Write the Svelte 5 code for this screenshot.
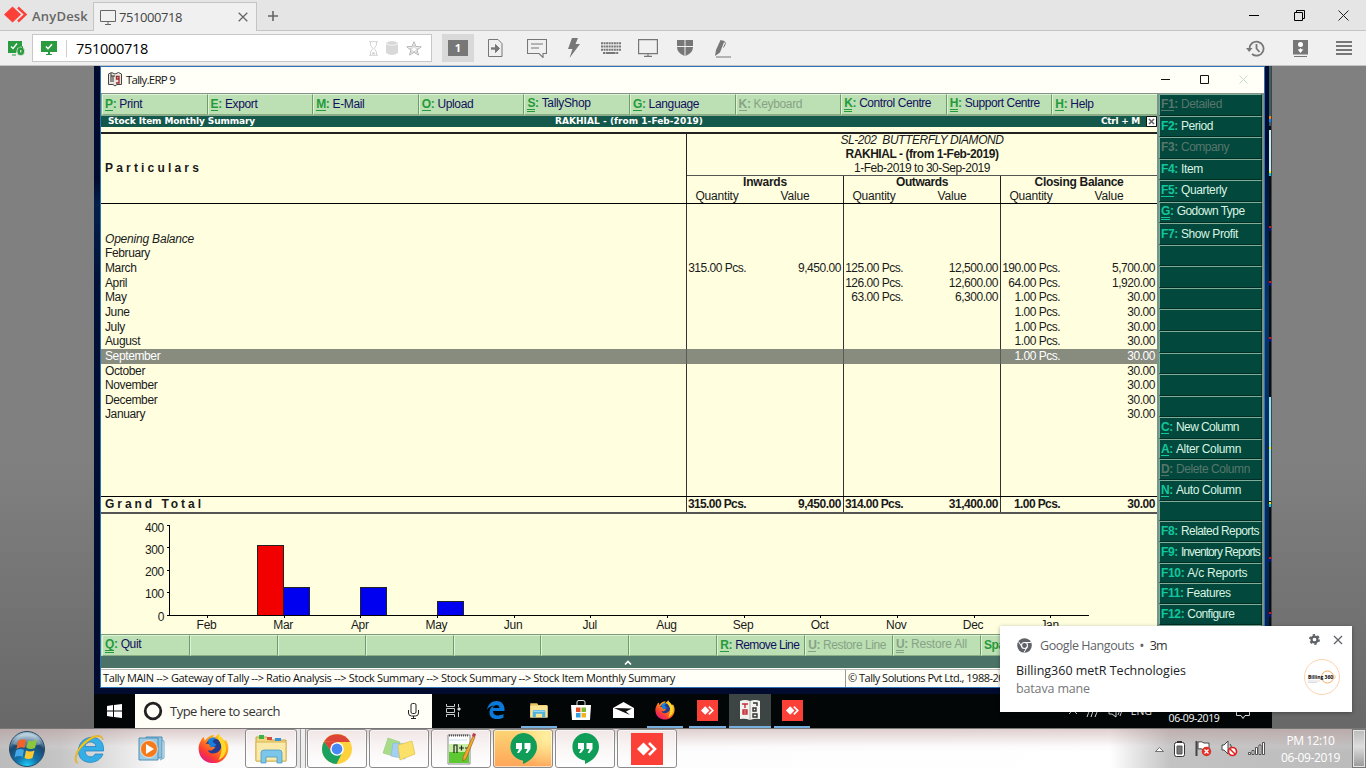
<script>
  function fit(node, width) {
    if (!width) return;
    node.style.letterSpacing = '0px';
    const natural = node.getBoundingClientRect().width;
    const count = node.textContent.length;
    node.style.letterSpacing = (width - natural) / count + 'px';
  }

  const menu = [
    ['P', 'Print', 1], ['E', 'Export', 1], ['M', 'E-Mail', 1], ['O', 'Upload', 1],
    ['S', 'TallyShop', 2], ['G', 'Language', 1], ['K', 'Keyboard', 1, true],
    ['K', 'Control Centre', 2, false, 72], ['H', 'Support Centre', 2, false, 75], ['H', 'Help', 1]
  ];

  const side = [
    ['F1', 'Detailed', 1, true, 41], ['F2', 'Period', 0, false, 32], ['F3', 'Company', 0, true, 48], ['F4', 'Item', 0, false, 22],
    ['F5', 'Quarterly', 1, false, 46], ['G', 'Godown Type', 2, false, 68], ['F7', 'Show Profit', 0, false, 57],
    null, null, null, null, null, null, null, null,
    ['C', 'New Column', 1, false, 63], ['A', 'Alter Column', 1, false, 65], ['D', 'Delete Column', 1, true, 74], ['N', 'Auto Column', 1, false, 65],
    null,
    ['F8', 'Related Reports', 0, false, 78], ['F9', 'Inventory Reports', 0, false, 79], ['F10', 'A/c Reports', 0, false, 60],
    ['F11', 'Features', 0, false, 44], ['F12', 'Configure', 0, false, 47], null, null
  ];

  const bottom = [
    ['Q', 'Quit', 2], null, null, null, null, null, null,
    ['R', 'Remove Line', 1, false, 64], ['U', 'Restore Line', 1, true, 63], ['U', 'Restore All', 2, true, 56],
    ['Space', 'Select', 0], null
  ];

  const rows = [
    ['Opening Balance'],
    ['February'],
    ['March', '315.00 Pcs.', '9,450.00', '125.00 Pcs.', '12,500.00', '190.00 Pcs.', '5,700.00'],
    ['April', '', '', '126.00 Pcs.', '12,600.00', '64.00 Pcs.', '1,920.00'],
    ['May', '', '', '63.00 Pcs.', '6,300.00', '1.00 Pcs.', '30.00'],
    ['June', '', '', '', '', '1.00 Pcs.', '30.00'],
    ['July', '', '', '', '', '1.00 Pcs.', '30.00'],
    ['August', '', '', '', '', '1.00 Pcs.', '30.00'],
    ['September', '', '', '', '', '1.00 Pcs.', '30.00'],
    ['October', '', '', '', '', '', '30.00'],
    ['November', '', '', '', '', '', '30.00'],
    ['December', '', '', '', '', '', '30.00'],
    ['January', '', '', '', '', '', '30.00']
  ];

  const months = ['Feb', 'Mar', 'Apr', 'May', 'Jun', 'Jul', 'Aug', 'Sep', 'Oct', 'Nov', 'Dec', 'Jan'];
</script>

{#snippet anydesk(size)}
  <svg width={size} height={size} viewBox="0 0 32 32">
    <rect width="32" height="32" fill="#fb4038" />
    <path d="M6 16l6.500-6.500L19 16l-6.500 6.500z" fill="#fff" />
    <path d="M18 10l6 6-6 6" fill="none" stroke="#fff" stroke-width="2.600" />
  </svg>
{/snippet}

{#snippet firefox(size)}
  <svg width={size} height={size} viewBox="0 0 32 32">
    <defs>
      <linearGradient id="fx" x1="0.9" y1="0" x2="0.2" y2="1">
        <stop offset="0" stop-color="#ffe52e" /><stop offset=".45" stop-color="#ff8a16" /><stop offset=".75" stop-color="#fb3b35" /><stop offset="1" stop-color="#e0148c" />
      </linearGradient>
    </defs>
    <path d="M3 8C4 5 6 4 6 4l1 4c3-4 6-6 10-6l-2 3c4-1 5-3 6-5 1 4 4 4 6 8l2-1c2 4 3 7 2 12-2 8-8 12-15 12S2 27 1 19C0 15 1 11 3 8z" fill="url(#fx)" />
    <path d="M8 11c3-4 8-7 13-4 5 4 4 10-1 13-5 2-8 1-10-2l4 0 4-3-5-2-2-2z" fill="#263b8e" />
    <path d="M10 8c2-3 5-4 8-3l-3 4 4 3c-1 2-4 2-6 3z" fill="#1582dd" />
    <path d="M21 2c5 4 8 9 8 16-1 5-4 8-8 10 4-7 5-15 0-21z" fill="#ffd928" />
  </svg>
{/snippet}

{#snippet folder(size)}
  <svg width={size} height={size} viewBox="0 0 32 32">
    <path d="M2 5h11l2 3h14v20H2z" fill="#e9c45d" />
    <path d="M2 9h28v19H2z" fill="#fbe394" />
    <path d="M6 28V18q0-2 2-2h16q2 0 2 2v10h-5v-6H11v6z" fill="#4fb3df" />
    <path d="M7 18h18" stroke="#9edcf4" stroke-width="2" />
  </svg>
{/snippet}

{#snippet hangouts()}
  <svg width="30" height="34" viewBox="0 0 30 34">
    <path d="M15 1a14 14 0 0 1 14 14c0 8-7 14-14 17v-3.500A13.800 13.800 0 0 1 15 1z" fill="#0f9d58" />
    <path d="M8 11h6v6l-3 4H9l2-4H8zm8.500 0h6v6l-3 4h-2l2-4h-3z" fill="#fff" />
  </svg>
{/snippet}

{#snippet key([k, label, lines, off, width])}
  <span class="key" class:off>
    <b class:one={lines === 1} class:two={lines === 2}>{k}</b><i>:</i>&nbsp;<span use:fit={width}>{label}</span>
  </span>
{/snippet}

<div class="screen">
  <header class="titlebar">
    <div class="brand">
      <svg width="25" height="20" viewBox="0 0 25 20">
        <path d="M0 8.500l8.500-8 8.500 8-8.500 8z" fill="#fb4038" />
        <path d="M14 1.500l7.500 7-7.500 7" fill="none" stroke="#fb4038" stroke-width="2.400" />
      </svg>
      <span use:fit={56}>AnyDesk</span>
    </div>
    <div class="tab">
      <svg width="16" height="15" viewBox="0 0 16 15" fill="none" stroke="#666" stroke-width="1"><path d="M.5.5h15v11H.5zM8 12v2M5 14.500h6" /></svg>
      <span class="tabname" use:fit={63}>751000718</span>
      <svg width="10" height="10" viewBox="0 0 10 10" stroke="#666" stroke-width="1.300"><path d="M.7.7l8.600 8.600M9.300.7L.7 9.300" /></svg>
    </div>
    <svg class="plus" width="10" height="10" viewBox="0 0 10 10" stroke="#666" stroke-width="1.600"><path d="M5 0v10M0 5h10" /></svg>
    <div class="controls">
      <svg width="10" height="11"><path d="M0 5.500h10" stroke="#000" /></svg>
      <svg width="11" height="11" viewBox="0 0 11 11" fill="none" stroke="#000"><path d="M.5 2.500h8v8h-8zM2.500 2.500v-2h8v8h-2" /></svg>
      <svg width="11" height="11" viewBox="0 0 11 11" stroke="#222" stroke-width="1"><path d="M.5.5l10 10M10.500.5l-10 10" /></svg>
    </div>
  </header>

  <div class="toolbar">
    <svg class="lock" width="17" height="15" viewBox="0 0 17 15">
      <path d="M0 0h14v6h-3l-3 6H0z" fill="#2a9b3f" /><path d="M4 14h4" stroke="#2a9b3f" />
      <path d="M3 5.500l2 2 4-5" stroke="#fff" fill="none" stroke-width="1.300" />
      <rect x="9" y="6" width="7.500" height="8.500" rx="3.500" fill="#2a9b3f" stroke="#f0f0f0" stroke-width=".7" /><path d="M11 7V5.500q1.700-3 3.500 0V7" stroke="#2a9b3f" fill="none" /><path d="M12.800 9v2.500" stroke="#fff" />
    </svg>
    <div class="address">
      <svg width="16" height="14" viewBox="0 0 16 14"><path d="M0 0h16v11H0zM7 11h2v2H7zM5 13h6v1H5z" fill="#2a9b3f" /><path d="M5 5.500l2 2.200 4-4.500" stroke="#fff" fill="none" stroke-width="1.500" /></svg>
      <span class="sep"></span>
      <span class="addr" use:fit={72}>751000718</span>
      <svg class="hour" width="9" height="15" viewBox="0 0 9 15" fill="none" stroke="#d4d4d4"><path d="M0 .7h9M0 14.300h9M1.500 1v3l2.300 3.500-2.300 3.500v3M7.500 1v3L5.200 7.500l2.300 3.500v3" /><path d="M3 13l1.500-2L6 13z" fill="#d4d4d4" /></svg>
      <svg class="drum" width="12" height="14" viewBox="0 0 12 14"><path d="M0 2q6-4 12 0v10q-6 4-12 0z" fill="#d8d8d8" /><path d="M0 3q6 3 12 0" fill="none" stroke="#f2f2f2" /></svg>
      <svg width="16" height="15" viewBox="0 0 16 15" fill="none" stroke="#b4b4b4"><path d="M8 .7l1.900 4.800 5.300.3-4.100 3.300 1.400 5L8 11.300l-4.500 2.800 1.400-5L.8 5.800l5.300-.3z" /><path d="M8 4l1.200 3 3 .3-2.400 1.800.8 2.700L8 10.200l-2.600 1.600.8-2.700-2.400-1.800 3-.3z" stroke-width=".6" /></svg>
    </div>
    <div class="tools">
      <span class="active"><b>1</b></span>
      <svg width="15" height="18" viewBox="0 0 15 18" fill="none" stroke="#777"><path d="M.5.5h9.500l4 4v13H.5z" /><path d="M3 9.500h5" stroke-width="2.400" /><path d="M7.500 5.500l4 4-4 4z" fill="#777" /></svg>
      <svg width="20" height="19" viewBox="0 0 20 19" fill="none" stroke="#777" stroke-width="1.100"><path d="M.5.5h19v14H16v4l-4-4H.5zM4 5h12M4 9h8" /></svg>
      <svg width="13" height="20" viewBox="0 0 13 20" fill="#777"><path d="M5 0h6L8.500 6H13L2.500 20l3-9H1z" /></svg>
      <svg width="20" height="12" viewBox="0 0 20 12" stroke="#777" stroke-width="2" fill="none"><path d="M0 1.200h20M0 4.600h20M0 7.800h20" stroke-dasharray="2 .57" /><path d="M2 10.900h16" stroke-dasharray="2 .6 10 .6 2" /></svg>
      <svg width="20" height="18" viewBox="0 0 20 18" fill="none" stroke="#777" stroke-width="1.200"><path d="M.6.6h18.800v14H.6zM10 15v2M6 17.400h8" /></svg>
      <svg width="16" height="16" viewBox="0 0 16 16" fill="#777"><path d="M0 0h7.500v6H0zM8.500 0H16v6H8.500zM0 7h7.500v9Q0 13 0 7zM8.500 7H16q0 6-7.500 9z" /></svg>
      <svg width="16" height="19" viewBox="0 0 16 19" fill="#777"><path d="M5.500 1l4 1L5 13.500 0 17l1-6z" /><path d="M1 18h15M9.500 2.500l1 2-2 4" stroke="#777" fill="none" /></svg>
    </div>
    <div class="rtools">
      <svg width="19" height="17" viewBox="0 0 19 17" fill="none" stroke="#777" stroke-width="1.800"><path d="M3.500 8.500a7 7 0 1 1 2.500 5.500M10.500 4v4.500l3 3.500" /><path d="M0 8h6.500L3.200 12z" fill="#777" stroke="none" /></svg>
      <svg width="15" height="17" viewBox="0 0 15 17"><path d="M0 0h15v14.500H0zM1 16h13v1H1z" fill="#777" /><circle cx="7.500" cy="4.500" r="2.500" fill="#fff" /><path d="M3.500 8q2 3 4 0 2 3 4 0l-4 5z" fill="#fff" /></svg>
      <svg width="16" height="14" viewBox="0 0 16 14" stroke="#777" stroke-width="2"><path d="M0 1h16M0 5h16M0 9h16M0 13h16" /></svg>
    </div>
  </div>

  <div class="viewport">
    <div class="remote">
      <div class="desk">
        <div class="edge left"></div>
        <div class="tally">
          <div class="caption">
            <svg width="14" height="15" viewBox="0 0 14 15"><path d="M.5 2l3-1.500L7 2l3.500-1.500 3 1.500v10.500H9L7 14l-2-1.500H.5z" fill="#e8e6de" stroke="#444" /><path d="M3 4h4M5 4v6M3 1v9" stroke="#333" fill="none" /><path d="M11 7H8.500V4.500H11V11H8" stroke="#a02828" stroke-width="1.300" fill="none" /></svg>
            <span use:fit={49}>Tally.ERP 9</span>
            <div class="capbtns">
              <svg width="9" height="9"><path d="M0 4.500h9" stroke="#111" /></svg>
              <svg width="9" height="9"><path d="M.5.5h8v8h-8z" stroke="#111" fill="none" /></svg>
              <svg width="9" height="9"><path d="M.5.5l8 8M8.500.5l-8 8" stroke="#c8d8d4" /></svg>
            </div>
          </div>
          <div class="work">
            <div class="main">
              <div class="menu">
                {#each menu as m}<div class="btn">{@render key(m)}</div>{/each}
              </div>
              <div class="strip">
                <span use:fit={147}>Stock Item Monthly Summary</span>
                <span use:fit={148}>RAKHIAL - (from 1-Feb-2019)</span>
                <span class="ctrl"><span use:fit={39}>Ctrl + M</span>
                  <svg width="11" height="11"><path d="M.5.5h10v10H.5z" fill="#fff" stroke="#111" /><path d="M3 3l5 5M8 3L3 8" stroke="#666" stroke-width="1.600" /></svg></span>
              </div>
              <div class="report">
                <div class="head">
                  <div class="part"><b use:fit={97}>Particulars</b></div>
                  <div class="cols">
                    <div class="desc">
                      <em use:fit={163}>SL-202&nbsp; BUTTERFLY DIAMOND</em>
                      <b use:fit={153}>RAKHIAL - (from 1-Feb-2019)</b>
                      <span use:fit={136}>1-Feb-2019 to 30-Sep-2019</span>
                    </div>
                    <div class="groups">
                      {#each [['Inwards', 44], ['Outwards', 52], ['Closing Balance', 89]] as [g, w]}
                        <div class="group"><b use:fit={w}>{g}</b><span use:fit={43}>Quantity</span><span use:fit={29}>Value</span></div>
                      {/each}
                    </div>
                  </div>
                </div>
                <div class="body rules">
                  {#each rows as r, i}
                    <div class="row" class:sel={i === 8} class:ital={i === 0}>
                      <span class="name">{r[0]}</span>
                      {#each [1, 3, 5] as c}
                        <span class="qty">{r[c] ?? ''}</span><span class="val">{r[c + 1] ?? ''}</span>
                      {/each}
                    </div>
                  {/each}
                </div>
                <div class="row total rules">
                  <span class="name" use:fit={103}>Grand Total</span>
                  <span class="qty">315.00 Pcs.</span><span class="val">9,450.00</span>
                  <span class="qty">314.00 Pcs.</span><span class="val">31,400.00</span>
                  <span class="qty">1.00 Pcs.</span><span class="val">30.00</span>
                </div>
                <svg class="chart" width="1056" height="119" viewBox="101 514 1056 119">
                  {#each [400, 300, 200, 100, 0] as v, i}
                    <text x="164" y={531.5 + i * 22.3} text-anchor="end">{v}</text>
                    <path d={`M167 ${Math.round(526 + i * 22.4) - 0.5}h3`} stroke="#000" />
                  {/each}
                  {#each months as m, i}
                    <text x={206.5 + i * 76.65} y="629" text-anchor="middle">{m}</text>
                    <path d={`M${Math.round(207 + i * 76.65) + 0.5} 615v3`} stroke="#000" />
                  {/each}
                  <g stroke="#222">
                    <rect x="257.5" y="545.5" width="26" height="70" fill="#f20000" />
                    <rect x="283.5" y="587.5" width="26" height="28" fill="#0000f0" />
                    <rect x="360.500" y="587.5" width="26" height="28" fill="#0000f0" />
                    <rect x="437.500" y="601.5" width="26" height="14" fill="#0000f0" />
                  </g>
                  <path d="M169.500 525v90.500H1089" fill="none" stroke="#000" />
                </svg>
              </div>
              <div class="bottom">
                {#each bottom as m}<div class="btn">{#if m}{@render key(m)}{/if}</div>{/each}
              </div>
            </div>
            <div class="side">
              {#each side as s}<div class="sbtn">{#if s}{@render key(s)}{/if}</div>{/each}
            </div>
          </div>
          <div class="expand"><svg width="8" height="5"><path d="M1 4.500L4 1.500l3 3" stroke="#fff" stroke-width="1.600" fill="none" /></svg></div>
          <div class="status">
            <span class="path"><span use:fit={572}>Tally MAIN --&gt; Gateway of Tally --&gt; Ratio Analysis --&gt; Stock Summary --&gt; Stock Summary --&gt; Stock Item Monthly Summary</span></span>
            <span class="copy">© Tally Solutions Pvt Ltd., 1988-2019</span>
          </div>
        </div>
        <div class="edge right">
          <svg width="3" height="628">
            <rect width="3" height="628" fill="#061010" /><rect x="2" width="1" height="628" fill="#444" />
            <rect y="0" width="2" height="60" fill="#355f62" /><rect y="50" width="2" height="3" fill="#f80" /><rect y="53" width="2" height="3" fill="#08f" />
            <rect y="64" width="2" height="42" fill="#c4eef4" /><rect y="105" width="2" height="2" fill="#ee0" /><rect y="107" width="2" height="3" fill="#0cd" />
            <rect y="331" width="2" height="104" fill="#8de6ee" /><rect y="381" width="2" height="2" fill="#ee0" /><rect y="436" width="2" height="2" fill="#ee0" /><rect y="438" width="2" height="3" fill="#0cd" />
            {#each [160, 215, 271, 491, 546] as y}<rect {y} width="2" height="2" fill="#e01010" /><rect y={y + 2} width="2" height="3" fill="#00108a" />{/each}
          </svg>
        </div>
      </div>
      <div class="rbar">
        <div class="rstart"><svg width="15" height="14" viewBox="0 0 15 14" fill="#fff"><path d="M0 2l6-1v5.500H0zM7 .9L15 0v6.500H7zM0 7.500h6V13l-6-1zM7 7.500h8V14l-8-.9z" /></svg></div>
        <div class="search">
          <svg width="20" height="20"><circle cx="10" cy="10" r="7.800" fill="none" stroke="#222" stroke-width="2.800" /></svg>
          <span use:fit={110}>Type here to search</span>
          <svg width="11" height="16" viewBox="0 0 11 16" fill="none" stroke="#222"><rect x="3" y=".5" width="5" height="10" rx="1.500" /><path d="M.5 7v3q0 3 3 3h4q3 0 3-3V7M5.500 13v2M3 15.500h5" /></svg>
        </div>
        <div class="rapps">
          <span><svg width="15" height="13" viewBox="0 0 15 13" fill="none" stroke="#ccc"><path d="M.5 0v2.500h8V0M.5 13v-2.500h8V13M.5 4.500h8v4h-8zM12.500 0v3M12.500 8v5" /><path d="M12 4h2v2h-2z" fill="#fff" /></svg></span>
          <span><svg width="18" height="18" viewBox="0 0 18 18"><path d="M0 9C1 3 5 0 9.500 0 15 0 18 4 17.500 10H6c0 5 6 5.500 10.500 3v3.500C10 20 2 18 2.500 10.500 3 7 5 5 8 4.500 4 4.500 1.500 6 0 9zm6-2h6.500c0-4-6-4-6.500 0z" fill="#0b79d8" /></svg></span>
          <span class="open">{@render folder(20)}</span>
          <span><svg width="20" height="20" viewBox="0 0 20 20"><path d="M6 6V2q0-1.500 2-1.500h4q2 0 2 1.500v4" fill="none" stroke="#ddd" /><path d="M0 5h20l-1 15H1z" fill="#fff" /><path d="M5 7.500h4.500V12H5z" fill="#e64b25" /><path d="M10.500 7.500H15V12h-4.500z" fill="#7cb82f" /><path d="M5 13h4.500v4.500H5z" fill="#2f9fe0" /><path d="M10.500 13H15v4.500h-4.500z" fill="#f3b51b" /></svg></span>
          <span><svg width="21" height="16" viewBox="0 0 21 16"><path d="M0 6l10.500-6L21 6v10H0z" fill="#fff" /><path d="M1 6l18 .5-6 3 4 3.500z" fill="#111" /></svg></span>
          <span class="open">{@render firefox(20)}</span>
          <span class="open">{@render anydesk(21)}</span>
          <span class="open current"><svg width="20" height="21" viewBox="0 0 20 21"><path d="M0 1q5-2 10 0 5-2 10 0v18q-5-1-10 1-5-2-10-1z" fill="#f2f2ee" /><path d="M10 1v19" stroke="#aaa" /><path d="M2 4h6M5 4v4M3 10h4v4H3zM7 12H3" stroke="#c33038" stroke-width="1.400" fill="none" /><path d="M13 3h4v3M13 8h3v3h-3zM13 14h4v3h-4z" stroke="#333" stroke-width="1.400" fill="none" /></svg></span>
          <span class="open">{@render anydesk(21)}</span>
        </div>
        <div class="rtray">
          <svg width="10" height="6"><path d="M1 5l4-4 4 4" stroke="#ddd" fill="none" /></svg>
          <svg width="14" height="12" fill="none" stroke="#ddd"><path d="M1 11L4 3M5 11l3-9M9 11l2-5" /></svg>
          <svg width="15" height="12" fill="none" stroke="#ddd"><path d="M1 4h3l4-3v10L4 8H1zM10 4q2 2 0 5M12 2q3 4 0 8" /></svg>
          <span class="eng">ENG</span>
          <span class="rdate">12:10 PM<br />06-09-2019</span>
          <svg width="14" height="15" fill="none" stroke="#ddd"><path d="M.5.5h13v10H9l-2 3-2-3H.5z" /></svg>
        </div>
      </div>
    </div>
  </div>

  <footer class="taskbar">
    <div class="start">
      <svg width="38" height="38" viewBox="0 0 38 38">
        <defs><radialGradient id="orb" cx=".5" cy="1" r=".9"><stop offset="0" stop-color="#1fd4ff" /><stop offset=".35" stop-color="#1273ac" /><stop offset=".75" stop-color="#1b486f" /><stop offset="1" stop-color="#9fbdd0" /></radialGradient></defs>
        <circle cx="19" cy="19" r="17.500" fill="url(#orb)" stroke="#2b4a60" />
        <path d="M5 14Q10 3 19 3t14 11q-14 6-28 0z" fill="#fff" opacity=".28" />
        <path d="M10 11q4-3 8-1l-1.500 8q-4-2-8 1z" fill="#f2632a" /><path d="M20 10.500q4 2 9-1l-2 8.500q-4 2-8.500 0z" fill="#8cc63c" /><path d="M8 20.500q4-2.500 8-.5l-1.500 7q-4-2-8 .5z" fill="#44a8e6" /><path d="M18 20.500q4 2 8.500 0l-2 7.500q-4 2-8 0z" fill="#fdc92e" />
      </svg>
    </div>
    <div class="pins">
      <svg width="32" height="32" viewBox="0 0 32 32"><path d="M29.500 18H11c0 6 8 8 10 3h8c-4 11-21 11-24 1C2 9 13 2 22 5c6 2 8 7 7.500 13zM11 13.500h11c-1-6-10-6-11 0z" fill="#35aee6" stroke="#1a7bbd" stroke-width=".7" /><path d="M29 7C29 0 18 1 9 10 0 19-1 31 4 30c-4-3-1-12 7-19S27 1 29 7z" fill="#f8c81c" stroke="#d99a10" stroke-width=".5" /></svg>
      <svg width="28" height="26" viewBox="0 0 28 26"><path d="M8 1h16v21H8z" fill="#8fc3df" stroke="#4f8fb5" /><path d="M24 4l2 1v17l-4 2" fill="none" stroke="#6aa7c8" /><path d="M1 2h19v22H1z" fill="#9dcbe4" stroke="#4f8fb5" /><circle cx="11" cy="13" r="8.500" fill="#f47a1c" stroke="#fff" stroke-width=".6" /><path d="M8 8l8 5-8 5z" fill="#fff" /></svg>
      {@render firefox(31)}
    </div>
    <div class="tasks">
      <div class="task explorer"><svg width="32" height="32" viewBox="0 0 32 32"><path d="M1 4h11l2 3h17v21H1z" fill="#f3d77e" stroke="#caa446" /><path d="M4 2h5v4H4z" fill="#3bb54a" /><path d="M12 4h5v3h-5z" fill="#d94b3a" /><path d="M20 5h6v3h-6z" fill="#3a93d9" /><path d="M1 9h30v19H1z" fill="#fae9a8" stroke="#d8b653" /><path d="M6 30V20q0-3 3-3h15q3 0 3 3v10h-5v-6H11v6z" fill="#7cc6ea" stroke="#3f93c2" stroke-width=".7" /></svg></div>
      <div class="stack"></div>
      <div class="task"><svg width="32" height="32" viewBox="0 0 32 32"><circle cx="16" cy="16" r="15" fill="#fdd23c" /><path d="M3 8.500A15 15 0 0 1 29 9H16z" fill="#dc4437" /><path d="M3 8.500A15 15 0 0 0 15.500 31L21 20l-10-1z" fill="#1ba261" /><path d="M3 8.500L10 18l6-9z" fill="#dc4437" /><circle cx="16" cy="16" r="6.800" fill="#fff" /><circle cx="16" cy="16" r="5.400" fill="#4688f4" /></svg></div>
      <div class="task"><svg width="34" height="28" viewBox="0 0 34 28"><path d="M6 3l12 4-4 15L1 18z" fill="#a8dc8a" stroke="#8bc46b" stroke-width=".5" /><path d="M11 8l13 1-1 15-14-3z" fill="#a4cff2" stroke="#7fb2dc" stroke-width=".5" /><path d="M16 10l14-4 3 13-15 6z" fill="#fbe16a" stroke="#d8bb3c" stroke-width=".6" /></svg></div>
      <div class="task"><svg width="32" height="34" viewBox="0 0 32 34"><path d="M3 3h22v29H3z" fill="#fff" stroke="#888" /><path d="M4 20h20v11H4z" fill="#5ec832" /><path d="M4 12h20v8H4z" fill="#c8f0a4" /><path d="M4 3.500h20" stroke="#555" stroke-dasharray="1 1" stroke-width="2" /><path d="M4 8h18" stroke="#cde0ee" /><path d="M9 21v-8h3v8M14 16h5M16.500 13.500v5M20 16h4" stroke="#222" fill="none" stroke-width="1.200" /><path d="M28 4l2 1-9 22-3 2v-4z" fill="#f3a72e" stroke="#8f5d18" stroke-width=".6" /><path d="M27 4l1-3 3 1-1 3z" fill="#b6404a" /></svg></div>
      <div class="task hot">{@render hangouts()}</div>
      <div class="task">{@render hangouts()}</div>
      <div class="task">{@render anydesk(32)}</div>
    </div>
    <div class="tray">
      <svg width="9" height="6"><path d="M.5 5.500l4-4 4 4z" fill="#fff" stroke="#555" stroke-width=".8" /></svg>
      <svg width="11" height="16" viewBox="0 0 11 16"><rect x=".5" y="1.500" width="10" height="14" rx="2" fill="#fff" stroke="#333" /><path d="M3 .5h5" stroke="#333" /><path d="M3 5h5v8H3z" fill="#777" stroke="#555" /></svg>
      <svg width="17" height="17" viewBox="0 0 17 17"><path d="M1.500 1v15" stroke="#444" stroke-width="2" /><path d="M3 2q4-1 6 1h5v7H9q-3-2-6-1z" fill="#fff" stroke="#444" /><circle cx="11.500" cy="11.500" r="4.700" fill="#e03028" /><path d="M9.500 9.500l4 4M13.500 9.500l-4 4" stroke="#fff" stroke-width="1.400" /></svg>
      <svg width="17" height="17" viewBox="0 0 17 17"><path d="M1 5h2l4-4v13l-4-4H1z" fill="#fff" stroke="#444" /><path d="M9 4q2 2 1 4" stroke="#444" fill="none" /><circle cx="11.500" cy="11.500" r="4" fill="#fff" stroke="#e02020" stroke-width="1.700" /><path d="M9 9l5 5" stroke="#e02020" stroke-width="1.500" /></svg>
      <svg width="17" height="13" viewBox="0 0 17 13" fill="#fff" stroke="#444" stroke-width=".9"><path d="M.5 10.500h2v2h-2zM4 8.500h2v4H4zM7.500 5.500h2v7h-2zM11 3h2v9.500h-2zM14.500.5h2v12h-2z" /></svg>
    </div>
    <div class="clock"><span use:fit={48}>PM 12:10</span><span use:fit={59}>06-09-2019</span></div>
    <div class="peek"></div>
  </footer>

  <aside class="toast">
    <svg width="15" height="15" viewBox="0 0 15 15"><circle cx="7.500" cy="7.500" r="7.300" fill="#5f6368" /><circle cx="7.500" cy="7.500" r="3" fill="none" stroke="#fff" stroke-width="1.100" /><path d="M7.500 4.500H14M4.900 9L1.500 3.500M10.100 9L7 14.500" stroke="#fff" stroke-width="1" /></svg>
    <div class="thead"><span use:fit={94}>Google Hangouts</span><b>•</b><span class="time" use:fit={17}>3m</span></div>
    <svg class="gear" width="11" height="11" viewBox="0 0 10 10"><circle cx="5" cy="5" r="2.700" fill="none" stroke="#5f6368" stroke-width="2" /><circle cx="5" cy="5" r="4.200" fill="none" stroke="#5f6368" stroke-width="1.500" stroke-dasharray="2.200 2.200" /></svg>
    <svg class="close" width="10" height="10" viewBox="0 0 10 10" stroke="#5f6368" stroke-width="1.300"><path d="M1 1l8 8M9 1L1 9" /></svg>
    <div class="msg"><span use:fit={170}>Billing360 metR Technologies</span><small use:fit={74}>batava mane</small></div>
    <svg class="logo" width="36" height="36" viewBox="0 0 36 36"><circle cx="18" cy="18" r="17.500" fill="#fff" stroke="#fbd3ae" /><circle cx="23.500" cy="18" r="6" fill="none" stroke="#f3a04c" stroke-width=".9" /><text x="4" y="19.800" font-size="5.500" font-weight="bold" textLength="25" lengthAdjust="spacingAndGlyphs">Billing 360</text><path d="M30 16l1.500 2-1.500 2" stroke="#f3a04c" fill="none" stroke-width=".6" /><path d="M4 22h12M4 23.500h9" stroke="#bbb" stroke-width=".5" /></svg>
  </aside>
</div>

<style>
  :global(body) { margin: 0; overflow: hidden; }
  .screen { position: relative; width: 1366px; height: 768px; overflow: hidden; display: flex; flex-direction: column; font-family: "Open Sans", sans-serif; white-space: nowrap; }
  .screen :global(*) { box-sizing: border-box; }
  svg { display: block; flex: none; }

  .titlebar { height: 31px; flex: none; background: #e5e5e5; border-bottom: 1px solid #c4c4c4; display: flex; align-items: center; }
  .brand { width: 93px; padding: 1px 0 0 4px; display: flex; align-items: center; gap: 3px; font: 600 13px "Open Sans", sans-serif; color: #666; }
  .tab { width: 164px; height: 29px; margin-top: 2px; background: #f0f0f0; border: 1px solid #c4c4c4; border-bottom: 0; display: flex; align-items: center; padding: 0 8px 0 6px; font-size: 13px; color: #444; align-self: flex-end; margin-bottom: -1px; }
  .tabname { margin-left: 3px; }
  .tab svg:last-child { margin-left: auto; }
  .plus { margin-left: 11px; margin-top: 2px; }
  .controls { margin-left: auto; display: flex; align-items: center; gap: 33px; padding-right: 17px; }
  .controls svg:first-child { margin-right: 2px; }

  .toolbar { height: 35px; flex: none; background: #f0f0f0; border-bottom: 1px solid #c4c4c4; display: flex; align-items: center; }
  .lock { margin-left: 8px; }
  .address { width: 400px; height: 28px; margin-left: 7px; background: #fff; border: 1px solid #c8c8c8; display: flex; align-items: center; padding: 0 9px 0 8px; }
  .sep { width: 1px; height: 17px; background: #ccc; margin: 0 9px; }
  .addr { font-size: 14.5px; color: #000; }
  .hour { margin-left: auto; }
  .drum { margin: 0 8px; }
  .tools { margin-left: 10px; display: grid; grid-template-columns: 32px 42px 42px 30px 46px 28px 46px 30px; place-items: center; height: 28px; }
  .active { width: 32px; height: 28px; background: #d9d9d9; display: grid; place-items: center; }
  .active b { width: 20px; height: 16px; background: #777; color: #fff; font-size: 11px; line-height: 16px; text-align: center; }
  .rtools { margin-left: auto; display: flex; gap: 28px; align-items: center; padding-right: 14px; }

  .viewport { flex: 1; min-height: 0; background: linear-gradient(#808080 60%, #686868); padding-left: 94px; }
  .remote { width: 1178px; height: 662px; display: flex; flex-direction: column; background: #010b30; }
  .desk { height: 628px; display: flex; flex: none; }
  .edge.left { width: 6px; background: linear-gradient(#010b30 18%, #02204a 22%, #011038 35%, #010b30); }
  .edge.right { width: 7px; padding-left: 4px; background: linear-gradient(#010b30 12%, #063568 40%, #042a5e 65%, #082050); }
  .tally { width: 1165px; height: 622px; border: 1px solid #2c72b4; background: #fffff8; display: flex; flex-direction: column; font: 12px "Liberation Sans", sans-serif; letter-spacing: -.35px; color: #151515; }
  .caption { height: 26px; flex: none; padding: 0 16px 2px 7px; display: flex; align-items: center; gap: 4px; font: 11.5px "Open Sans", sans-serif; }
  .capbtns { margin-left: auto; display: flex; gap: 30px; }
  .work { height: 563px; flex: none; display: flex; border-top: 1px solid #87918b; }
  .main { width: 1056px; display: flex; flex-direction: column; }
  .menu { height: 22px; flex: none; display: grid; grid-template-columns: repeat(10, 105.6px); background: #8fac8a; padding: 0 0 1px 1px; overflow: hidden; }
  .btn { background: #bcdfb4; border: 1px solid #6f9c6c; border-left-color: #ddf3d6; border-top-color: #ddf3d6; border-bottom-color: #89ad85; display: flex; align-items: center; padding: 0 0 1px 2px; overflow: hidden; }
  .key { line-height: 14px; color: #10105c; }
  .key b { color: #259a3a; display: inline-block; line-height: 12px; }
  .key i { color: #259a3a; font-style: normal; font-weight: bold; }
  .key .one { border-bottom: 1px solid #259a3a; }
  .key .two { border-bottom: 3px double #259a3a; }
  .key.off, .key.off b, .key.off i { color: #86a384; border-color: #86a384; }
  .strip { height: 11px; flex: none; background: #14584c; color: #fff; font: bold 9px "DejaVu Sans", sans-serif; display: grid; grid-template-columns: 447px 1fr auto; align-items: center; padding-left: 7px; line-height: 11px; }
  .strip > span { justify-self: start; }
  .ctrl { display: flex; align-items: center; gap: 6px; }
  .report { flex: 1; background: #ffffe0; padding-top: 5px; min-height: 0; color: #1a1a1a; }
  .head { height: 72px; border-top: 2px solid #222; border-bottom: 1px solid #000; display: grid; grid-template-columns: 585px 471px; }
  .part { display: flex; align-items: center; padding: 0 0 2px 4px; }
  .cols { border-left: 1px solid #222; display: flex; flex-direction: column; }
  .desc { height: 42px; border-bottom: 1px solid #555; display: flex; flex-direction: column; align-items: center; line-height: 13.8px; }
  .groups { flex: 1; display: grid; grid-template-columns: 156px 157px 157px; }
  .group { display: grid; grid-template-columns: 60px 96px; justify-items: center; align-content: start; line-height: 13.500px; border-left: 1px solid #222; }
  .group:first-child { border-left: 0; }
  .group b { grid-column: 1 / 3; }
  .rules { background-image: linear-gradient(#333, #333), linear-gradient(#333, #333), linear-gradient(#333, #333); background-repeat: no-repeat; background-size: 1px 100%; background-position: 585px 0, 742px 0, 899px 0; }
  .body { height: 292px; padding-top: 27.8px; }
  .row { height: 14.65px; line-height: 14.65px; display: grid; grid-template-columns: 585px repeat(3, 60px 97px); }
  .name { padding-left: 4px; justify-self: start; letter-spacing: -.38px; }
  .qty { text-align: right; letter-spacing: -.5px; }
  .val { text-align: right; padding-right: 2px; letter-spacing: -.47px; }
  .ital { font-style: italic; }
  .ital .name { letter-spacing: -.2px; }
  .sel { background: rgba(100, 105, 98, .77); color: #fff; }
  .total { height: 18px; line-height: 15px; border-top: 1px solid #000; border-bottom: 2px solid #555; font-weight: bold; background-clip: padding-box; }
  .total .qty { letter-spacing: -.6px; }
  .chart { display: block; }
  .chart text { font: 12px "Liberation Sans", sans-serif; fill: #1a1a1a; letter-spacing: -.3px; }
  .bottom { height: 22px; flex: none; display: grid; grid-template-columns: repeat(12, 87.9px); padding-left: 1px; background: #bcdfb4; border-top: 1px solid #7d9a79; overflow: hidden; }
  .side { width: 107px; background: #77948a; padding: 0 2px; display: grid; grid-template-rows: repeat(16, 21.55px) repeat(11, 20.67px); overflow: hidden; }
  .sbtn { background: #03483c; border: 1px solid #022d26; border-left-color: #7fae98; border-top: 1px solid #7fae98; display: flex; align-items: center; padding: 0 0 1px 1px; overflow: hidden; }
  .side .key { color: #d8f4e2; }
  .side .key b, .side .key i { color: #12c79c; border-color: #12c79c; }
  .side .key.off, .side .key.off b, .side .key.off i { color: #57766c; border-color: #57766c; }
  .expand { height: 12px; flex: none; background: #4b7266; display: flex; justify-content: center; align-items: center; padding-right: 109px; }
  .status { flex: 1; display: grid; grid-template-columns: 744px 1fr; font: 11px "Open Sans", sans-serif; line-height: 15px; padding-top: 1px; color: #111; }
  .path { border-top: 1px solid #bbb; padding-left: 2px; }
  .copy { border-left: 1px solid #999; border-top: 1px solid #bbb; padding-left: 2px; letter-spacing: -.5px; }

  .rbar { height: 34px; background: #020606; display: flex; color: #fff; }
  .rstart { width: 41px; display: grid; place-items: center; }
  .search { width: 297px; background: #fffff8; display: flex; align-items: center; padding: 0 13px 0 8px; gap: 7px; color: #333; font-size: 13px; }
  .search svg:last-child { margin-left: auto; }
  .rapps { display: grid; grid-template-columns: 42px 44px 42px 42px 42px 42px 43px 42px 42px; }
  .rapps span { display: grid; place-items: center; border-bottom: 2px solid transparent; margin: 0 3px; }
  .rapps .open { border-color: #76aede; }
  .rapps .current { background: #3c4444; margin: 0; }
  .rtray { margin-left: auto; display: flex; align-items: center; gap: 8px; font-size: 10.5px; line-height: 15px; padding: 0 22px 0 0; }
  .rtray > svg { margin-top: 2px; }
  .rdate { width: 68px; text-align: center; letter-spacing: -.4px; }

  .taskbar { height: 40px; flex: none; display: flex; border-top: 1px solid #777; background: linear-gradient(rgba(185, 150, 150, .45), rgba(240, 225, 225, .12) 45%, transparent 60%), linear-gradient(90deg, #bbb 0, #c5c5c5 60px, #fafafa 160px, #fff 1110px, #c3c3c3 1170px, #bbb); }
  .start { width: 54px; display: grid; place-items: center; }
  .pins { width: 191px; display: flex; align-items: center; padding-left: 20px; gap: 32px; }
  .tasks { display: flex; gap: 2px; }
  .task { width: 60px; height: 39px; border: 1px solid #8b8b8b; border-radius: 3px; display: grid; place-items: center; background: linear-gradient(rgba(245, 235, 235, .8), rgba(255, 255, 255, .75)); box-shadow: inset 0 0 0 1px #fff9; }
  .explorer { width: 52px; }
  .stack { width: 9px; margin-left: -2px; margin-right: -1px; border: solid #999; border-width: 0 1px 0 0; background: linear-gradient(90deg, #e6e6e6 40%, #999 40%, #999 52%, #eee 52%); }
  .hot { background: radial-gradient(circle at 90% 20%, #fff0a0, transparent 50%), linear-gradient(#fcd574, #ffa559); }
  .tray { margin-left: auto; width: 114px; display: flex; align-items: center; justify-content: space-between; padding-right: 4px; }
  .clock { width: 83px; display: flex; flex-direction: column; align-items: center; justify-content: center; color: #fff; font-size: 12px; line-height: 17px; }
  .peek { width: 14px; border: 1px solid #777; background: linear-gradient(#bbb, #ddd 45%, #999); box-shadow: inset 0 0 0 1px #e4e4e4; }

  .toast { position: absolute; left: 1000px; top: 626px; width: 352px; height: 86px; background: #fff; box-shadow: 0 1px 4px rgba(0, 0, 0, .35); display: grid; grid-template-columns: 16px 1fr 10px 11px; grid-template-rows: 20px 38px; column-gap: 7px; padding: 9px 8px 8px 17px; align-items: center; font-size: 12.5px; color: #5f6368; }
  .thead { display: flex; gap: 6px; }
  .thead b { font-size: 10px; line-height: 17px; }
  .time { color: #333; }
  .gear { margin-left: -7px; margin-top: -11px; }
  .close { margin-top: -11px; }
  .msg { grid-column: 1 / 3; display: flex; flex-direction: column; align-items: flex-start; line-height: 18px; color: #202124; padding-top: 11px; margin-left: -1px; }
  .msg small { font-size: 12.5px; color: #777; }
  .logo { margin-left: -12px; margin-top: 5px; }
  .logo text { font-family: "Open Sans", sans-serif; }
</style>
